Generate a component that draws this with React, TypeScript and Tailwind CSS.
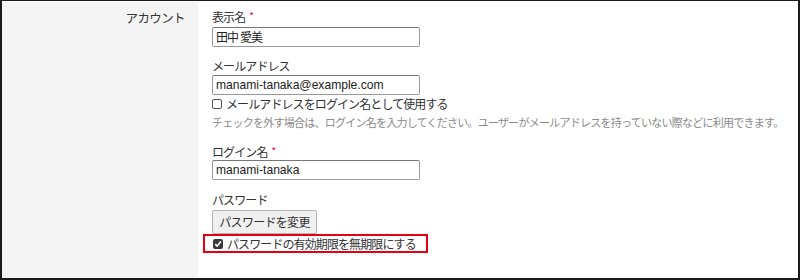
import React from "react";

const jp = { fontFamily: '"Noto Sans CJK JP", "Noto Sans", sans-serif' };

function Req() {
  return <span className="text-[#e4002b] ml-[4px] text-[10px] align-top relative top-[-1px] tracking-normal">*</span>;
}

function Input({ value, latin }: { value: string; latin?: boolean }) {
  return (
    <div
      className="w-[208px] h-[20px] border border-[#999] border-t-[#777] rounded-[2px] bg-white flex items-center pl-[3px] text-[#222] leading-none"
      style={
        latin
          ? { fontFamily: '"Liberation Sans", Arial, sans-serif', fontSize: "12.1px", letterSpacing: "0px" }
          : { ...jp, fontSize: "12px", letterSpacing: "-0.9px" }
      }
    >
      {value}
    </div>
  );
}

function Box({ checked }: { checked?: boolean }) {
  return checked ? (
    <span className="w-[10px] h-[10px] rounded-[2px] bg-[#3a3a3a] flex items-center justify-center shrink-0">
      <svg width="8" height="8" viewBox="0 0 8 8">
        <path d="M1.2 4.2 L3.2 6.1 L6.9 1.6" stroke="#fff" strokeWidth="1.6" fill="none" />
      </svg>
    </span>
  ) : (
    <span className="w-[10px] h-[10px] rounded-[2px] border border-[#555] bg-white shrink-0" />
  );
}

export default function App() {
  return (
    <div
      className="w-[800px] h-[280px] border-l-2 border-r-2 border-b-2 border-t border-[#1a1a1a] bg-white pt-px flex text-[#333]"
      style={jp}
    >
      <div className="w-[196px] bg-[#f4f4f4] flex justify-end pr-[13px] pt-[8px]">
        <span className="text-[12.5px] leading-[16px] tracking-[-0.6px]">アカウント</span>
      </div>
      <div className="flex-1 pl-[14px] pt-[7px] flex flex-col text-[12px] tracking-[-0.9px]">
        <div className="leading-[16px] h-[16px]">
          表示名<Req />
        </div>
        <div className="mt-[2px]">
          <Input value="田中 愛美" />
        </div>
        <div className="leading-[16px] h-[16px] mt-[11px]">メールアドレス</div>
        <div className="mt-[1px]">
          <Input value="manami-tanaka@example.com" latin />
        </div>
        <div className="flex items-center gap-[4px] mt-[1px] h-[15px] leading-[15px]">
          <Box />
          <span>メールアドレスをログイン名として使用する</span>
        </div>
        <div className="mt-[4px] text-[11px] tracking-[-0.75px] leading-[14px] text-[#8a8a8a] whitespace-nowrap">
          チェックを外す場合は、ログイン名を入力してください。ユーザーがメールアドレスを持っていない際などに利用できます。
        </div>
        <div className="leading-[16px] h-[16px] mt-[15px]">
          ログイン名<Req />
        </div>
        <div className="mt-[0px]">
          <Input value="manami-tanaka" latin />
        </div>
        <div className="leading-[16px] h-[16px] mt-[12px]">パスワード</div>
        <div className="mt-[2px]">
          <button className="h-[24px] w-[105px] border border-[#b5b5b5] rounded-[2px] bg-[#f0f0f0] text-[12px] tracking-[-0.7px] text-[#333] leading-none">
            パスワードを変更
          </button>
        </div>
        <div className="-ml-[9px] w-[225px] h-[19px] border-2 border-[#e60012] flex items-center pl-[8px] gap-[4px]">
          <Box checked />
          <span className="leading-[15px]">パスワードの有効期限を無期限にする</span>
        </div>
      </div>
    </div>
  );
}
